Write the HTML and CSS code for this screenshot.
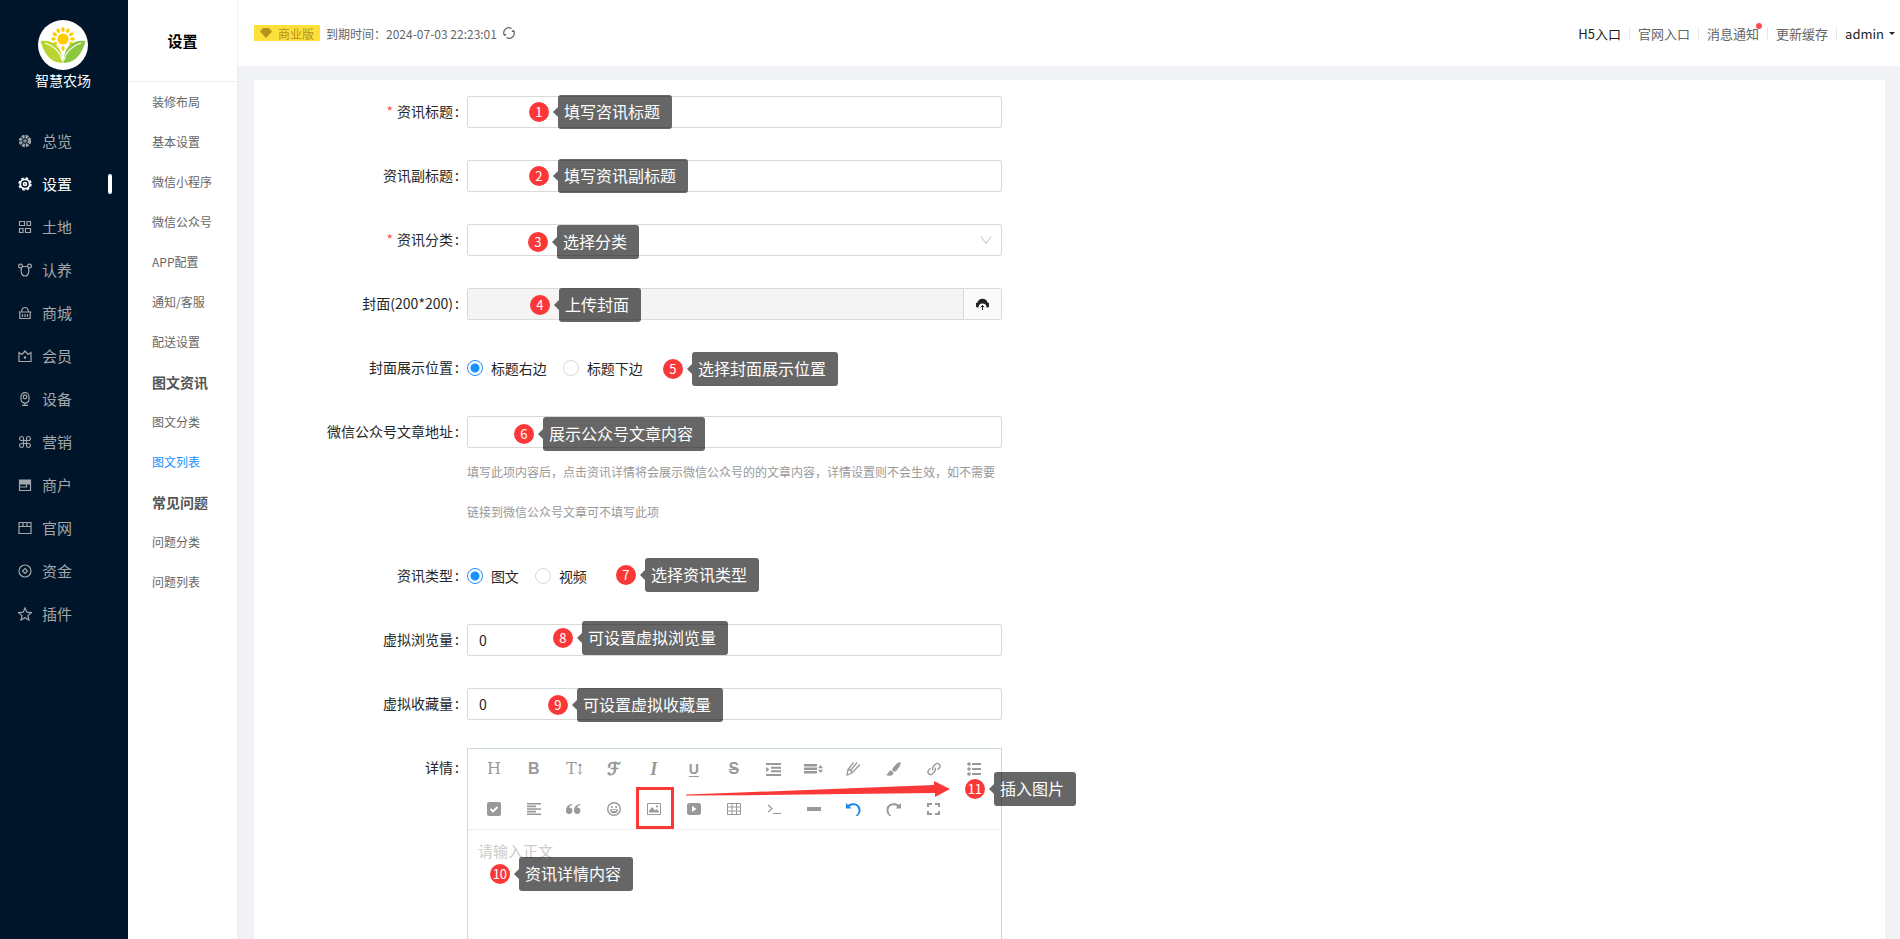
FILE: index.html
```html
<!DOCTYPE html>
<html lang="zh-CN">
<head>
    <meta charset="UTF-8">
    <title>智慧农场 - 图文列表</title>
    <link rel="stylesheet" href="styles.css">
</head>
<body>
<div class="layout">
    <!-- 主菜单 -->
    <aside class="sider">
        <div class="logo">
            <svg class="logo-img" viewBox="0 0 50 50">
                <circle cx="25" cy="25" r="25" fill="#fff"/>
                <g fill="#fc0">
                    <circle cx="25" cy="19" r="5.6"/>
                    <ellipse cx="25" cy="9.5" rx="1.7" ry="2.4"/>
                    <ellipse cx="25" cy="9.5" rx="1.7" ry="2.4" transform="rotate(30 25 19)"/>
                    <ellipse cx="25" cy="9.5" rx="1.7" ry="2.4" transform="rotate(60 25 19)"/>
                    <ellipse cx="25" cy="9.5" rx="1.7" ry="2.4" transform="rotate(90 25 19)"/>
                    <ellipse cx="25" cy="9.5" rx="1.7" ry="2.4" transform="rotate(120 25 19)"/>
                    <ellipse cx="25" cy="9.5" rx="1.7" ry="2.4" transform="rotate(180 25 19)"/>
                    <ellipse cx="25" cy="9.5" rx="1.7" ry="2.4" transform="rotate(240 25 19)"/>
                    <ellipse cx="25" cy="9.5" rx="1.7" ry="2.4" transform="rotate(270 25 19)"/>
                    <ellipse cx="25" cy="9.5" rx="1.7" ry="2.4" transform="rotate(300 25 19)"/>
                    <ellipse cx="25" cy="9.5" rx="1.7" ry="2.4" transform="rotate(330 25 19)"/>
                </g>
                <path d="M2.500 21C13 20 24 24 24.500 43C13 43 6 34 2.500 21Z" fill="#b9d532"/>
                <path d="M47.500 21C37 20 26 24 25.500 43C37 43 44 34 47.500 21Z" fill="#8dc63f"/>
                <path d="M7 23C16 26 22 31 24 40M43 23C34 26 28 31 26 40" fill="none" stroke="#fff" stroke-width="1.200"/>
            </svg>
            <div class="logo-name">智慧农场</div>
        </div>
        <nav class="menu">
            <a href="#" class="menu-item"><svg class="menu-icon" viewBox="0 0 14 14"><circle cx="7" cy="7" r="4.500" stroke-width="3.400" stroke-dasharray="2.600 .934"/><circle cx="7" cy="7" r="1.200"/></svg>总览</a>
            <a href="#" class="menu-item active"><svg class="menu-icon" viewBox="0 0 14 14"><circle cx="7" cy="7" r="4.700" stroke-width="1.800"/><circle cx="7" cy="7" r="1.500" stroke-width="1.600"/><circle cx="7" cy="7" r="6" stroke-width="1.400" stroke-dasharray="2.600 2.112"/></svg>设置</a>
            <a href="#" class="menu-item"><svg class="menu-icon" viewBox="0 0 14 14"><path d="M1.500 1.500h5v4h-5zM9 1.500h3.500v4H9zM1.500 8.500H5v4H1.500zM7.500 8.500h5v4h-5z"/></svg>土地</a>
            <a href="#" class="menu-item"><svg class="menu-icon" viewBox="0 0 14 14"><circle cx="2.500" cy="3" r="1.900"/><circle cx="11.500" cy="3" r="1.900"/><path d="M4.300 3.500h5.400M3.500 5c-1 4 0 8 3.500 8s4.500-4 3.500-8"/></svg>认养</a>
            <a href="#" class="menu-item"><svg class="menu-icon" viewBox="0 0 14 14"><path d="M.500 6h13M1.800 6v6.500h10.400V6M3.500 5.500C4 2.500 5.500 1.500 7 1.500s3 1 3.500 4M4.500 8v3M7 8v3M9.500 8v3"/></svg>商城</a>
            <a href="#" class="menu-item"><svg class="menu-icon" viewBox="0 0 14 14"><path d="M1 3.500l3 2 3-3.500 3 3.500 3-2v9H1z"/><circle cx="7" cy="8.500" r=".700"/></svg>会员</a>
            <a href="#" class="menu-item"><svg class="menu-icon" viewBox="0 0 14 14"><rect x="3" y=".700" width="8" height="10.500" rx="4"/><circle cx="7" cy="5" r="1.800"/><path d="M7 11v2M4 13.300h6"/></svg>设备</a>
            <a href="#" class="menu-item"><svg class="menu-icon" viewBox="0 0 14 14"><path d="M5.500 5.500V3.200A2 2 0 1 0 3.300 5.500H10.700A2 2 0 1 0 8.500 3.300V10.700A2 2 0 1 0 10.700 8.500H3.300A2 2 0 1 0 5.500 10.700Z"/></svg>营销</a>
            <a href="#" class="menu-item"><svg class="menu-icon" viewBox="0 0 14 14"><path d="M1.500 2h11v4h-11z" fill="currentColor"/><path d="M1.500 6v6.500h11V6M1.500 9h7V6"/></svg>商户</a>
            <a href="#" class="menu-item"><svg class="menu-icon" viewBox="0 0 14 14"><path d="M1 1.500h12v11H1zM1 5.500h12M5 2v3M9 2v3"/></svg>官网</a>
            <a href="#" class="menu-item"><svg class="menu-icon" viewBox="0 0 14 14"><circle cx="7" cy="7" r="6"/><path d="M7 4.500L9.500 7 7 9.500 4.500 7z"/></svg>资金</a>
            <a href="#" class="menu-item"><svg class="menu-icon" viewBox="0 0 14 14"><path d="M7 1l1.800 4.200 4.600.400-3.500 3 1.100 4.400L7 10.700 3 13l1.100-4.400-3.500-3 4.600-.400z"/></svg>插件</a>
        </nav>
    </aside>

    <!-- 二级菜单 -->
    <aside class="sub-sider">
        <h2 class="sub-title">设置</h2>
        <nav class="sub-menu">
            <a href="#">装修布局</a>
            <a href="#">基本设置</a>
            <a href="#">微信小程序</a>
            <a href="#">微信公众号</a>
            <a href="#">APP配置</a>
            <a href="#">通知/客服</a>
            <a href="#">配送设置</a>
            <h3>图文资讯</h3>
            <a href="#">图文分类</a>
            <a href="#" class="active">图文列表</a>
            <h3>常见问题</h3>
            <a href="#">问题分类</a>
            <a href="#">问题列表</a>
        </nav>
    </aside>

    <div class="main">
        <header class="header">
            <div class="header-left">
                <span class="edition"><svg width="12" height="10" viewBox="0 0 12 10"><path d="M3 0h6l3 3.500L6 10 0 3.500z" fill="#b8901c"/></svg>商业版</span>
                <span>到期时间：2024-07-03 22:23:01</span>
                <button type="button" class="reload" aria-label="刷新"><svg width="12" height="12" viewBox="0 0 12 12"><path d="M1.300 8A5 5 0 0 1 8.500 1.600M10.700 4A5 5 0 0 1 3.500 10.400" fill="none" stroke="#666" stroke-width="1.200"/><path d="M0 7h3.500L2 9.500zM12 5H8.500L10 2.500z" fill="#666"/></svg></button>
            </div>
            <div class="header-right">
                <a href="#" class="dark">H5入口</a>
                <a href="#">官网入口</a>
                <a href="#" class="notice">消息通知</a>
                <a href="#">更新缓存</a>
                <a href="#" class="dark user">admin<i class="caret"></i></a>
            </div>
        </header>

        <div class="content">
            <form class="card">
                <div class="form-item">
                    <label for="title" class="required">资讯标题</label>
                    <div class="control">
                        <input type="text" id="title" class="input">
                        <div class="mark mark-1"><b>1</b><span>填写咨讯标题</span></div>
                    </div>
                </div>
                <div class="form-item">
                    <label for="subtitle">资讯副标题</label>
                    <div class="control">
                        <input type="text" id="subtitle" class="input">
                        <div class="mark mark-2"><b>2</b><span>填写资讯副标题</span></div>
                    </div>
                </div>
                <div class="form-item">
                    <label for="category" class="required">资讯分类</label>
                    <div class="control">
                        <select id="category" class="input"><option></option></select>
                        <svg class="select-arrow" viewBox="0 0 12 12"><path d="M1 2.500l5 7 5-7"/></svg>
                        <div class="mark mark-3"><b>3</b><span>选择分类</span></div>
                    </div>
                </div>
                <div class="form-item">
                    <label for="cover">封面(200*200)</label>
                    <div class="control">
                        <div class="input-group">
                            <input type="text" id="cover" class="input" disabled>
                            <button type="button" class="upload" aria-label="上传"><svg width="13" height="12" viewBox="0 0 13 12"><path d="M2.500 9.500A2.500 2.500 0 0 1 1.500 4.500 5.200 5.200 0 0 1 11.500 4.500 2.500 2.500 0 0 1 10.500 9.500 4 4 0 0 0 2.500 9.500Z" fill="#222"/><path d="M6.500 12V7.500M4.800 9.200l1.700-1.700 1.700 1.700" fill="none" stroke="#222"/></svg></button>
                        </div>
                        <div class="mark mark-4"><b>4</b><span>上传封面</span></div>
                    </div>
                </div>
                <div class="form-item">
                    <span class="label">封面展示位置</span>
                    <div class="control radios">
                        <label class="radio"><input type="radio" name="position" checked>标题右边</label>
                        <label class="radio"><input type="radio" name="position">标题下边</label>
                        <div class="mark mark-5"><b>5</b><span>选择封面展示位置</span></div>
                    </div>
                </div>
                <div class="form-item">
                    <label for="url">微信公众号文章地址</label>
                    <div class="control">
                        <input type="text" id="url" class="input">
                        <p class="tips">填写此项内容后，点击资讯详情将会展示微信公众号的的文章内容，详情设置则不会生效，如不需要链接到微信公众号文章可不填写此项</p>
                        <div class="mark mark-6"><b>6</b><span>展示公众号文章内容</span></div>
                    </div>
                </div>
                <div class="form-item">
                    <span class="label">资讯类型</span>
                    <div class="control radios">
                        <label class="radio"><input type="radio" name="type" checked>图文</label>
                        <label class="radio"><input type="radio" name="type">视频</label>
                        <div class="mark mark-7"><b>7</b><span>选择资讯类型</span></div>
                    </div>
                </div>
                <div class="form-item">
                    <label for="views">虚拟浏览量</label>
                    <div class="control">
                        <input type="text" id="views" class="input" value="0">
                        <div class="mark mark-8"><b>8</b><span>可设置虚拟浏览量</span></div>
                    </div>
                </div>
                <div class="form-item">
                    <label for="favorites">虚拟收藏量</label>
                    <div class="control">
                        <input type="text" id="favorites" class="input" value="0">
                        <div class="mark mark-9"><b>9</b><span>可设置虚拟收藏量</span></div>
                    </div>
                </div>
                <div class="form-item">
                    <label for="detail">详情</label>
                    <div class="control">
                        <div class="editor">
                            <div class="toolbar">
                                <button type="button" class="t-serif">H</button>
                                <button type="button" class="t-bold">B</button>
                                <button type="button" class="t-serif">T<svg width="4" height="12" viewBox="0 0 4 12"><path d="M2 0l2 3H0zM2 12l2-3H0zM1.500 2h1v8h-1z"/></svg></button>
                                <button type="button" class="t-script">ℱ</button>
                                <button type="button" class="t-italic">I</button>
                                <button type="button" class="t-under">U</button>
                                <button type="button" class="t-strike">S</button>
                                <button type="button"><svg width="15" height="13" viewBox="0 0 15 13"><path d="M0 0h15v2H0zM5 3.700h10v2H5zM5 7.300h10v2H5zM0 11h15v2H0zM0 4l3.500 2.500L0 9z"/></svg></button>
                                <button type="button"><svg width="19" height="12" viewBox="0 0 19 12"><path d="M0 1h13v2.500H0zM0 4.500h13V7H0zM0 8h13v2.500H0zM16.500 2L19 5.200h-5zM16.500 10L19 6.800h-5z"/></svg></button>
                                <button type="button"><svg width="15" height="14" viewBox="0 0 15 14" class="line"><path d="M7.500.500L2 7.500 1 13l5-2L14 2.500M2 7.500c2 0 3.500 1 4 3.500M11 .500L4.500 8.500" stroke-width="1.300"/></svg></button>
                                <button type="button"><svg width="15" height="14" viewBox="0 0 15 14"><path d="M14.500 0C12 0 7 4.500 6 8l2.500 2C12 8 15 3 14.500 0zM5 8.500C2 8.500 3 12 0 12.500 2 14.500 7.500 14.500 7.500 10.500z"/></svg></button>
                                <button type="button"><svg width="14" height="14" viewBox="0 0 14 14" class="line"><path d="M6.300 8.300a2.600 2.600 0 0 1 0-3.700L8.500 2.300A2.600 2.600 0 0 1 12.200 6L10.500 7.700M7.700 5.700a2.600 2.600 0 0 1 0 3.700L5.500 11.700A2.600 2.600 0 0 1 1.800 8L3.500 6.300" stroke-width="1.400"/></svg></button>
                                <button type="button"><svg width="14" height="14" viewBox="0 0 14 14"><circle cx="2" cy="2" r="1.800"/><circle cx="2" cy="7" r="1.800"/><circle cx="2" cy="12" r="1.800"/><path d="M5 1h9v2H5zM5 6h9v2H5zM5 11h9v2H5z"/></svg></button>
                                <button type="button"><svg width="14" height="14" viewBox="0 0 14 14"><rect width="14" height="14" rx="2"/><path d="M3.500 7l2.500 2.500 4.500-4.500" fill="none" stroke="#fff" stroke-width="1.800"/></svg></button>
                                <button type="button"><svg width="14" height="12" viewBox="0 0 14 12"><path d="M0 0h14v1.600H0zM0 2.600h9v1.600H0zM0 5.200h14v1.600H0zM0 7.800h9v1.600H0zM0 10.400h14V12H0z"/></svg></button>
                                <button type="button"><svg width="15" height="10" viewBox="0 0 15 10"><path d="M6 0C2 .500 0 3 0 6.500a3.200 3.200 0 1 0 3-3C3.500 2 4.500 1.200 6.500 1zM14 0c-4 .500-6 3-6 6.500a3.200 3.200 0 1 0 3-3C11.500 2 12.500 1.200 14.500 1z"/></svg></button>
                                <button type="button"><svg width="14" height="14" viewBox="0 0 14 14"><circle cx="7" cy="7" r="6.300" fill="none" stroke="#999" stroke-width="1.400"/><circle cx="4.800" cy="5" r="1"/><circle cx="9.200" cy="5" r="1"/><path d="M3 7.300h8a4 4 0 0 1-8 0z"/><path d="M4.800 8.500h4.400" stroke="#fff"/></svg></button>
                                <button type="button"><svg width="14" height="12" viewBox="0 0 14 12"><path d="M.500.500h13v11H.500z" fill="none" stroke="#999"/><path d="M2 9.500V8l3-4 3 3.500 1.500-1.500 2.500 2.500v1z"/><circle cx="10" cy="3.300" r="1.100"/></svg></button>
                                <button type="button"><svg width="14" height="12" viewBox="0 0 14 12"><path d="M2 .500h10l1.500 1V10.500l-1.500 1H2l-1.500-1v-9z" stroke="#999"/><path d="M5 3l4.500 3L5 9z" fill="#fff"/></svg></button>
                                <button type="button"><svg width="14" height="12" viewBox="0 0 14 12" class="line"><path d="M.500.500h13v11H.500zM0 4h14M0 8h14M5 0v12M9.500 0v12"/></svg></button>
                                <button type="button"><svg width="14" height="10" viewBox="0 0 14 10" class="line"><path d="M1 1l4 3.500L1 8M6 9.500h8" stroke-width="1.200"/></svg></button>
                                <button type="button"><svg width="14" height="4" viewBox="0 0 14 4"><path d="M0 0h14v4H0z"/></svg></button>
                                <button type="button" class="blue"><svg width="15" height="13" viewBox="0 0 15 13"><path d="M0 0l1.800 1.800C7-1.500 14.500.500 14.500 7c0 2.500-1.200 4.500-3 6h-2c2-1.500 3-3.500 3-5.500C12.500 2.500 7.500 1 3.600 3.600L5.500 5.500H0z"/></svg></button>
                                <button type="button"><svg width="15" height="13" viewBox="0 0 15 13"><path d="M15 0l-1.800 1.800C8-1.500.500.500.500 7c0 2.500 1.200 4.500 3 6h2c-2-1.500-3-3.500-3-5.500C2.500 2.500 7.500 1 11.400 3.600L9.500 5.500H15z"/></svg></button>
                                <button type="button"><svg width="13" height="12" viewBox="0 0 13 12"><path d="M0 0h5v2H2v2H0zM8 0h5v4h-2V2H8zM0 8h2v2h3v2H0zM11 8h2v4H8v-2h3z"/></svg></button>
                            </div>
                            <textarea id="detail" placeholder="请输入正文"></textarea>
                        </div>
                        <div class="red-box"></div>
                        <svg class="red-arrow" viewBox="0 0 266 18"><path d="M0 14.500L54 12.500 248 5V1l16 8-15 8v-4L60 15.200 0 15.500z" fill="#fb3838"/></svg>
                        <div class="mark mark-10"><b>10</b><span>资讯详情内容</span></div>
                        <div class="mark mark-11"><b>11</b><span>插入图片</span></div>
                    </div>
                </div>
            </form>
        </div>
    </div>
</div>
</body>
</html>
```

FILE: styles.css
```css
* {
    box-sizing: border-box;
}
body, h2, h3, p {
    margin: 0;
}
body, button, input, select, textarea {
    font-family: "Noto Sans CJK SC", "Noto Sans", sans-serif;
    font-size: 14px;
    color: #262626;
}
a {
    text-decoration: none;
    color: #666;
}
button {
    padding: 0;
    border: none;
    background: none;
    cursor: pointer;
}
.layout {
    display: flex;
    height: 100vh;
    background: #f0f2f5;
}

/* 主菜单 */
.sider {
    flex: none;
    width: 128px;
    background: #001529;
}
.logo {
    padding: 20px 2px 0 0;
    text-align: center;
}
.logo-img {
    display: block;
    width: 50px;
    height: 50px;
    margin: 0 auto;
}
.logo-name {
    line-height: 20px;
    color: #fff;
}
.menu {
    margin-top: 29px;
}
.menu-item {
    position: relative;
    display: flex;
    align-items: center;
    gap: 10px;
    height: 43px;
    padding-left: 18px;
    font-size: 15px;
    color: #a3a7ac;
}
.menu-icon {
    width: 14px;
    height: 14px;
    fill: none;
    stroke: currentColor;
    stroke-width: 1.2;
}
.menu-item.active {
    color: #fff;
}
.menu-item.active::after {
    content: "";
    position: absolute;
    right: 16px;
    width: 4px;
    height: 20px;
    border-radius: 2px;
    background: #fff;
}

/* 二级菜单 */
.sub-sider {
    flex: none;
    width: 110px;
    border-right: 1px solid #f0f0f0;
    background: #fff;
}
.sub-title {
    height: 82px;
    border-bottom: 1px solid #f0f0f0;
    line-height: 82px;
    text-align: center;
    font-size: 15px;
    color: #000;
}
.sub-menu a, .sub-menu h3 {
    display: block;
    padding-left: 24px;
    line-height: 40px;
    font-size: 12px;
}
.sub-menu h3 {
    font-size: 14px;
    color: #555;
}
.sub-menu .active {
    color: #1890ff;
}

/* 顶栏 */
.main {
    flex: 1;
    min-width: 0;
    display: flex;
    flex-direction: column;
}
.header {
    flex: none;
    display: flex;
    align-items: center;
    justify-content: space-between;
    height: 66px;
    padding: 0 5px 0 16px;
    background: #fff;
}
.header-left {
    display: flex;
    align-items: center;
    gap: 6px;
    font-size: 12px;
    color: #666;
}
.edition {
    display: flex;
    align-items: center;
    gap: 6px;
    height: 16px;
    padding: 0 6px;
    background: #fbe13a;
    color: #b8901c;
}
.reload svg {
    display: block;
}
.header-right {
    display: flex;
    align-items: center;
    font-size: 13px;
}
.header-right a {
    line-height: 13px;
    padding: 0 8px;
    border-left: 1px solid #e8e8e8;
}
.header-right a:first-child {
    border-left: none;
}
.header-right .dark {
    color: #222;
}
.header-right .user {
    display: flex;
    align-items: center;
    gap: 5px;
    padding-right: 0;
}
.caret {
    border: 3px solid transparent;
    border-top-color: #222;
    border-bottom: none;
}
.notice {
    position: relative;
}
.notice::after {
    content: "";
    position: absolute;
    top: -4px;
    right: 5px;
    width: 6px;
    height: 6px;
    border-radius: 50%;
    background: #ff4d4f;
}

/* 表单 */
.content {
    flex: 1;
    padding: 14px 15px 14px 16px;
    overflow-y: auto;
    scrollbar-width: none;
}
.card {
    padding: 12px;
    background: #fff;
}
.form-item {
    display: grid;
    grid-template-columns: 12.5% 33.33%;
    margin-bottom: 24px;
    line-height: 40px;
}
.form-item > label, .label {
    padding-right: 8px;
    line-height: 38px;
    text-align: right;
}
.form-item > label::after, .label::after {
    content: ":";
    margin-left: 2px;
}
.form-item > .required::before {
    content: "*";
    margin-right: 4px;
    color: #ff4d4f;
}
.control {
    position: relative;
}
.input {
    display: block;
    width: 100%;
    height: 32px;
    margin: 4px 0;
    padding: 0 11px;
    border: 1px solid #d9d9d9;
    border-radius: 2px;
    background: #fff;
    appearance: none;
}
.select-arrow {
    position: absolute;
    top: 14px;
    right: 10px;
    width: 12px;
    height: 12px;
    fill: none;
    stroke: #bfbfbf;
}
.input-group {
    display: flex;
    margin: 4px 0;
}
.input-group .input {
    flex: 1;
    margin: 0;
    border-radius: 2px 0 0 2px;
    background: #f4f4f4;
}
.upload {
    width: 38px;
    border: 1px solid #d9d9d9;
    border-left: none;
    border-radius: 0 2px 2px 0;
    background: #fafafa;
}
.radios {
    display: flex;
    gap: 16px;
    height: 40px;
}
.radio {
    display: flex;
    align-items: center;
    gap: 8px;
    line-height: 38px;
}
.radio input {
    width: 16px;
    height: 16px;
    margin: 0;
    border: 1px solid #d9d9d9;
    border-radius: 50%;
    appearance: none;
}
.radio input:checked {
    border-color: #1890ff;
    background: radial-gradient(#1890ff 4px, #fff 5px);
}
.tips {
    font-size: 12px;
    color: #999;
}

/* 编辑器 */
.editor {
    border: 1px solid #c9d8db;
}
.toolbar {
    display: flex;
    flex-wrap: wrap;
    padding: 0 6px;
    border-bottom: 1px solid #eee;
}
.toolbar button {
    display: flex;
    align-items: center;
    justify-content: center;
    width: 40px;
    height: 40px;
    line-height: 20px;
    font-size: 16px;
    color: #999;
}
.toolbar svg {
    fill: #999;
}
.toolbar .line {
    fill: none;
    stroke: #999;
}
.toolbar .blue svg {
    fill: #1e88e5;
}
.toolbar .t-serif, .toolbar .t-italic {
    font-family: "DejaVu Serif", serif;
    font-size: 16px;
}
.toolbar .t-serif {
    gap: 1px;
}
.toolbar .t-italic {
    font-family: "Liberation Serif", serif;
    font-size: 18px;
    font-style: italic;
    font-weight: bold;
}
.toolbar .t-bold {
    font-family: "Liberation Sans", sans-serif;
    font-weight: bold;
}
.toolbar .t-script {
    font-family: "DejaVu Sans", sans-serif;
    font-size: 17px;
    -webkit-text-stroke: 1px #999;
}
.toolbar .t-under {
    font-family: "Liberation Sans", sans-serif;
    font-size: 14px;
    font-weight: bold;
    text-decoration: underline;
    text-underline-offset: 2px;
}
.toolbar .t-strike {
    font-family: "Liberation Sans", sans-serif;
    font-weight: bold;
    text-decoration: line-through;
}
.editor textarea {
    display: block;
    width: 100%;
    height: 300px;
    padding: 9px 10px;
    border: none;
    outline: none;
    resize: none;
    line-height: 24px;
    font-size: 15px;
}
.editor textarea::placeholder {
    color: #ccc;
}

/* 步骤标注 */
.mark {
    position: absolute;
    display: flex;
    align-items: center;
    gap: 9px;
    white-space: nowrap;
    color: #fff;
}
.mark b {
    width: 20px;
    height: 20px;
    border-radius: 50%;
    background: #fb3838;
    line-height: 20px;
    text-align: center;
    font-size: 13px;
    font-weight: normal;
}
.mark span {
    position: relative;
    padding: 0 12px 2px 6px;
    border-radius: 3px;
    background: rgba(0, 0, 0, .6);
    line-height: 32px;
    font-size: 16px;
}
.mark span::before {
    content: "";
    position: absolute;
    left: -5px;
    top: 12px;
    border: 5px solid transparent;
    border-right-color: rgba(0, 0, 0, .6);
    border-left: none;
}
.mark-1 { left: 62px; top: 3px; }
.mark-2 { left: 62px; top: 3px; }
.mark-3 { left: 61px; top: 5px; }
.mark-4 { left: 63px; top: 4px; }
.mark-5 { left: 196px; top: 4px; }
.mark-6 { left: 47px; top: 5px; }
.mark-7 { left: 149px; top: 2px; }
.mark-8 { left: 86px; top: 1px; }
.mark-9 { left: 81px; top: 4px; }
.mark-10 { left: 23px; top: 109px; }
.mark-11 { left: 498px; top: 24px; }
.red-box {
    position: absolute;
    left: 169px;
    top: 39px;
    width: 38px;
    height: 42px;
    border: 3px solid #fb3838;
}
.red-arrow {
    position: absolute;
    left: 219px;
    top: 32px;
    width: 266px;
    height: 18px;
}
```
